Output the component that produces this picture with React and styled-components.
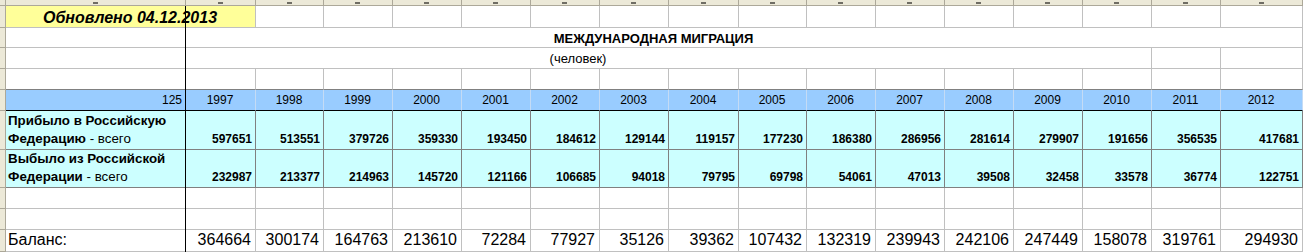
import React from 'react';
import styled, { createGlobalStyle } from 'styled-components';

const GlobalStyle = createGlobalStyle`
  html, body {
    margin: 0;
    padding: 0;
    background: #fff;
    overflow: hidden;
  }
  body {
    font-family: "Liberation Sans", Arial, sans-serif;
    color: #000;
  }
`;

// data
const YEARS = [1997, 1998, 1999, 2000, 2001, 2002, 2003, 2004, 2005, 2006, 2007, 2008, 2009, 2010, 2011, 2012];
const ARRIVED = [597651, 513551, 379726, 359330, 193450, 184612, 129144, 119157, 177230, 186380, 286956, 281614, 279907, 191656, 356535, 417681];
const DEPARTED = [232987, 213377, 214963, 145720, 121166, 106685, 94018, 79795, 69798, 54061, 47013, 39508, 32458, 33578, 36774, 122751];
const BALANCE = [364664, 300174, 164763, 213610, 72284, 77927, 35126, 39362, 107432, 132319, 239943, 242106, 247449, 158078, 319761, 294930];

const COL_WIDTHS = [180, 70, 68, 69, 69, 69, 69, 69, 70, 68, 69, 69, 69, 69, 69, 69, 82];
const ROW_HEIGHTS = [6, 22, 20, 21, 21, 21, 39, 38, 21, 21, 22];

const GRID = '#c0c0c0';
const DARK = '#808080';

// styles
const Sheet = styled.div`
  position: relative;
  display: grid;
  width: 1303px;
  grid-template-columns: 6px ${COL_WIDTHS.map(w => `${w}px`).join(' ')};
  grid-template-rows: ${ROW_HEIGHTS.map(h => `${h}px`).join(' ')};
`;

const Corner = styled.div`
  box-sizing: border-box;
  background: #ece9d8;
  border-right: 1px solid #aca899;
  border-bottom: 1px solid #aca899;
`;

// column header strip: only the bottom edge of the letters peeks in
const ColHead = styled.div`
  box-sizing: border-box;
  position: relative;
  background: #ece9d8;
  border-right: 1px solid #aca899;
  border-bottom: 1px solid #aca899;

  &::after {
    content: '';
    position: absolute;
    left: 50%;
    bottom: 1px;
    width: 5px;
    height: 2px;
    margin-left: -3px;
    background: #6f6d64;
  }
`;

const RowHead = styled.div`
  box-sizing: border-box;
  background: #ece9d8;
  border-right: 1px solid #aca899;
  border-bottom: 1px solid #aca899;
`;

const Cell = styled.div`
  box-sizing: border-box;
  grid-column: span ${p => p.$span || 1};
  display: flex;
  align-items: flex-end;
  justify-content: ${p => (p.$align === 'right' ? 'flex-end' : p.$align === 'center' ? 'center' : 'flex-start')};
  padding: 0 3px 2px 2px;
  background: #fff;
  border-right: 1px solid ${p => p.$edge || GRID};
  border-bottom: 1px solid ${p => p.$under || GRID};
  font-size: 12px;
  line-height: 14px;
  white-space: nowrap;
`;

const NoteCell = styled(Cell)`
  background: #ffff99;
  padding-bottom: 0;
  font-size: 16px;
  line-height: 18px;
  font-weight: bold;
  font-style: italic;
`;

const TitleCell = styled(Cell)`
  padding-bottom: 1px;
  font-size: 13px;
  line-height: 15px;
  font-weight: bold;
`;

const UnitCell = styled(Cell)`
  padding-bottom: 2px;
  font-size: 13px;
  line-height: 15px;
`;

const YearCell = styled(Cell)`
  background: #99ccff;
  padding-bottom: 3px;
  border-right-color: ${p => p.$edge || '#c4dbf5'};
  border-bottom-color: #000;
`;

const LabelCell = styled(Cell)`
  flex-direction: column;
  align-items: flex-start;
  justify-content: flex-end;
  background: #ccffff;
  padding: 0 2px 1px 2px;
  border-right-color: ${DARK};
  border-bottom-color: ${DARK};
  font-size: 13.33px;
  line-height: 18px;

  b {
    font-weight: bold;
  }
`;

const ValueCell = styled(Cell)`
  background: #ccffff;
  padding-bottom: 3px;
  border-right-color: ${DARK};
  border-bottom-color: ${DARK};
  font-weight: bold;
`;

const TotalCell = styled(Cell)`
  padding: 0 4px 2px 2px;
  font-size: 16px;
  line-height: 18px;
`;

const FreezeLine = styled.div`
  position: absolute;
  left: 185px;
  top: 6px;
  bottom: 0;
  width: 1px;
  background: #000;
`;

// component
const Blank = ({ count, under }) =>
  Array.from({ length: count }, (_, i) => <Cell key={i} $under={under} />);

const App = () => (
  <>
    <GlobalStyle />
    <Sheet>
      <Corner />
      {COL_WIDTHS.map((_, i) => (
        <ColHead key={i} />
      ))}

      <RowHead />
      <NoteCell $span={2} $align="center">Обновлено 04.12.2013</NoteCell>
      <Blank count={15} />

      <RowHead />
      <TitleCell $span={17} $align="center">МЕЖДУНАРОДНАЯ МИГРАЦИЯ</TitleCell>

      <RowHead />
      <UnitCell $span={15} $align="center">(человек)</UnitCell>
      <Blank count={2} />

      <RowHead />
      <Blank count={17} under={DARK} />

      <RowHead />
      <YearCell $align="right" $edge="#000">125</YearCell>
      {YEARS.map(y => (
        <YearCell key={y} $align="center">{y}</YearCell>
      ))}

      <RowHead />
      <LabelCell>
        <b>Прибыло в Российскую</b>
        <span><b>Федерацию</b> - всего</span>
      </LabelCell>
      {ARRIVED.map((v, i) => (
        <ValueCell key={i} $align="right">{v}</ValueCell>
      ))}

      <RowHead />
      <LabelCell>
        <b>Выбыло из Российской</b>
        <span><b>Федерации</b> - всего</span>
      </LabelCell>
      {DEPARTED.map((v, i) => (
        <ValueCell key={i} $align="right">{v}</ValueCell>
      ))}

      <RowHead />
      <Blank count={17} />

      <RowHead />
      <Blank count={17} />

      <RowHead />
      <TotalCell>Баланс:</TotalCell>
      {BALANCE.map((v, i) => (
        <TotalCell key={i} $align="right">{v}</TotalCell>
      ))}

      <FreezeLine />
    </Sheet>
  </>
);

export default App;
